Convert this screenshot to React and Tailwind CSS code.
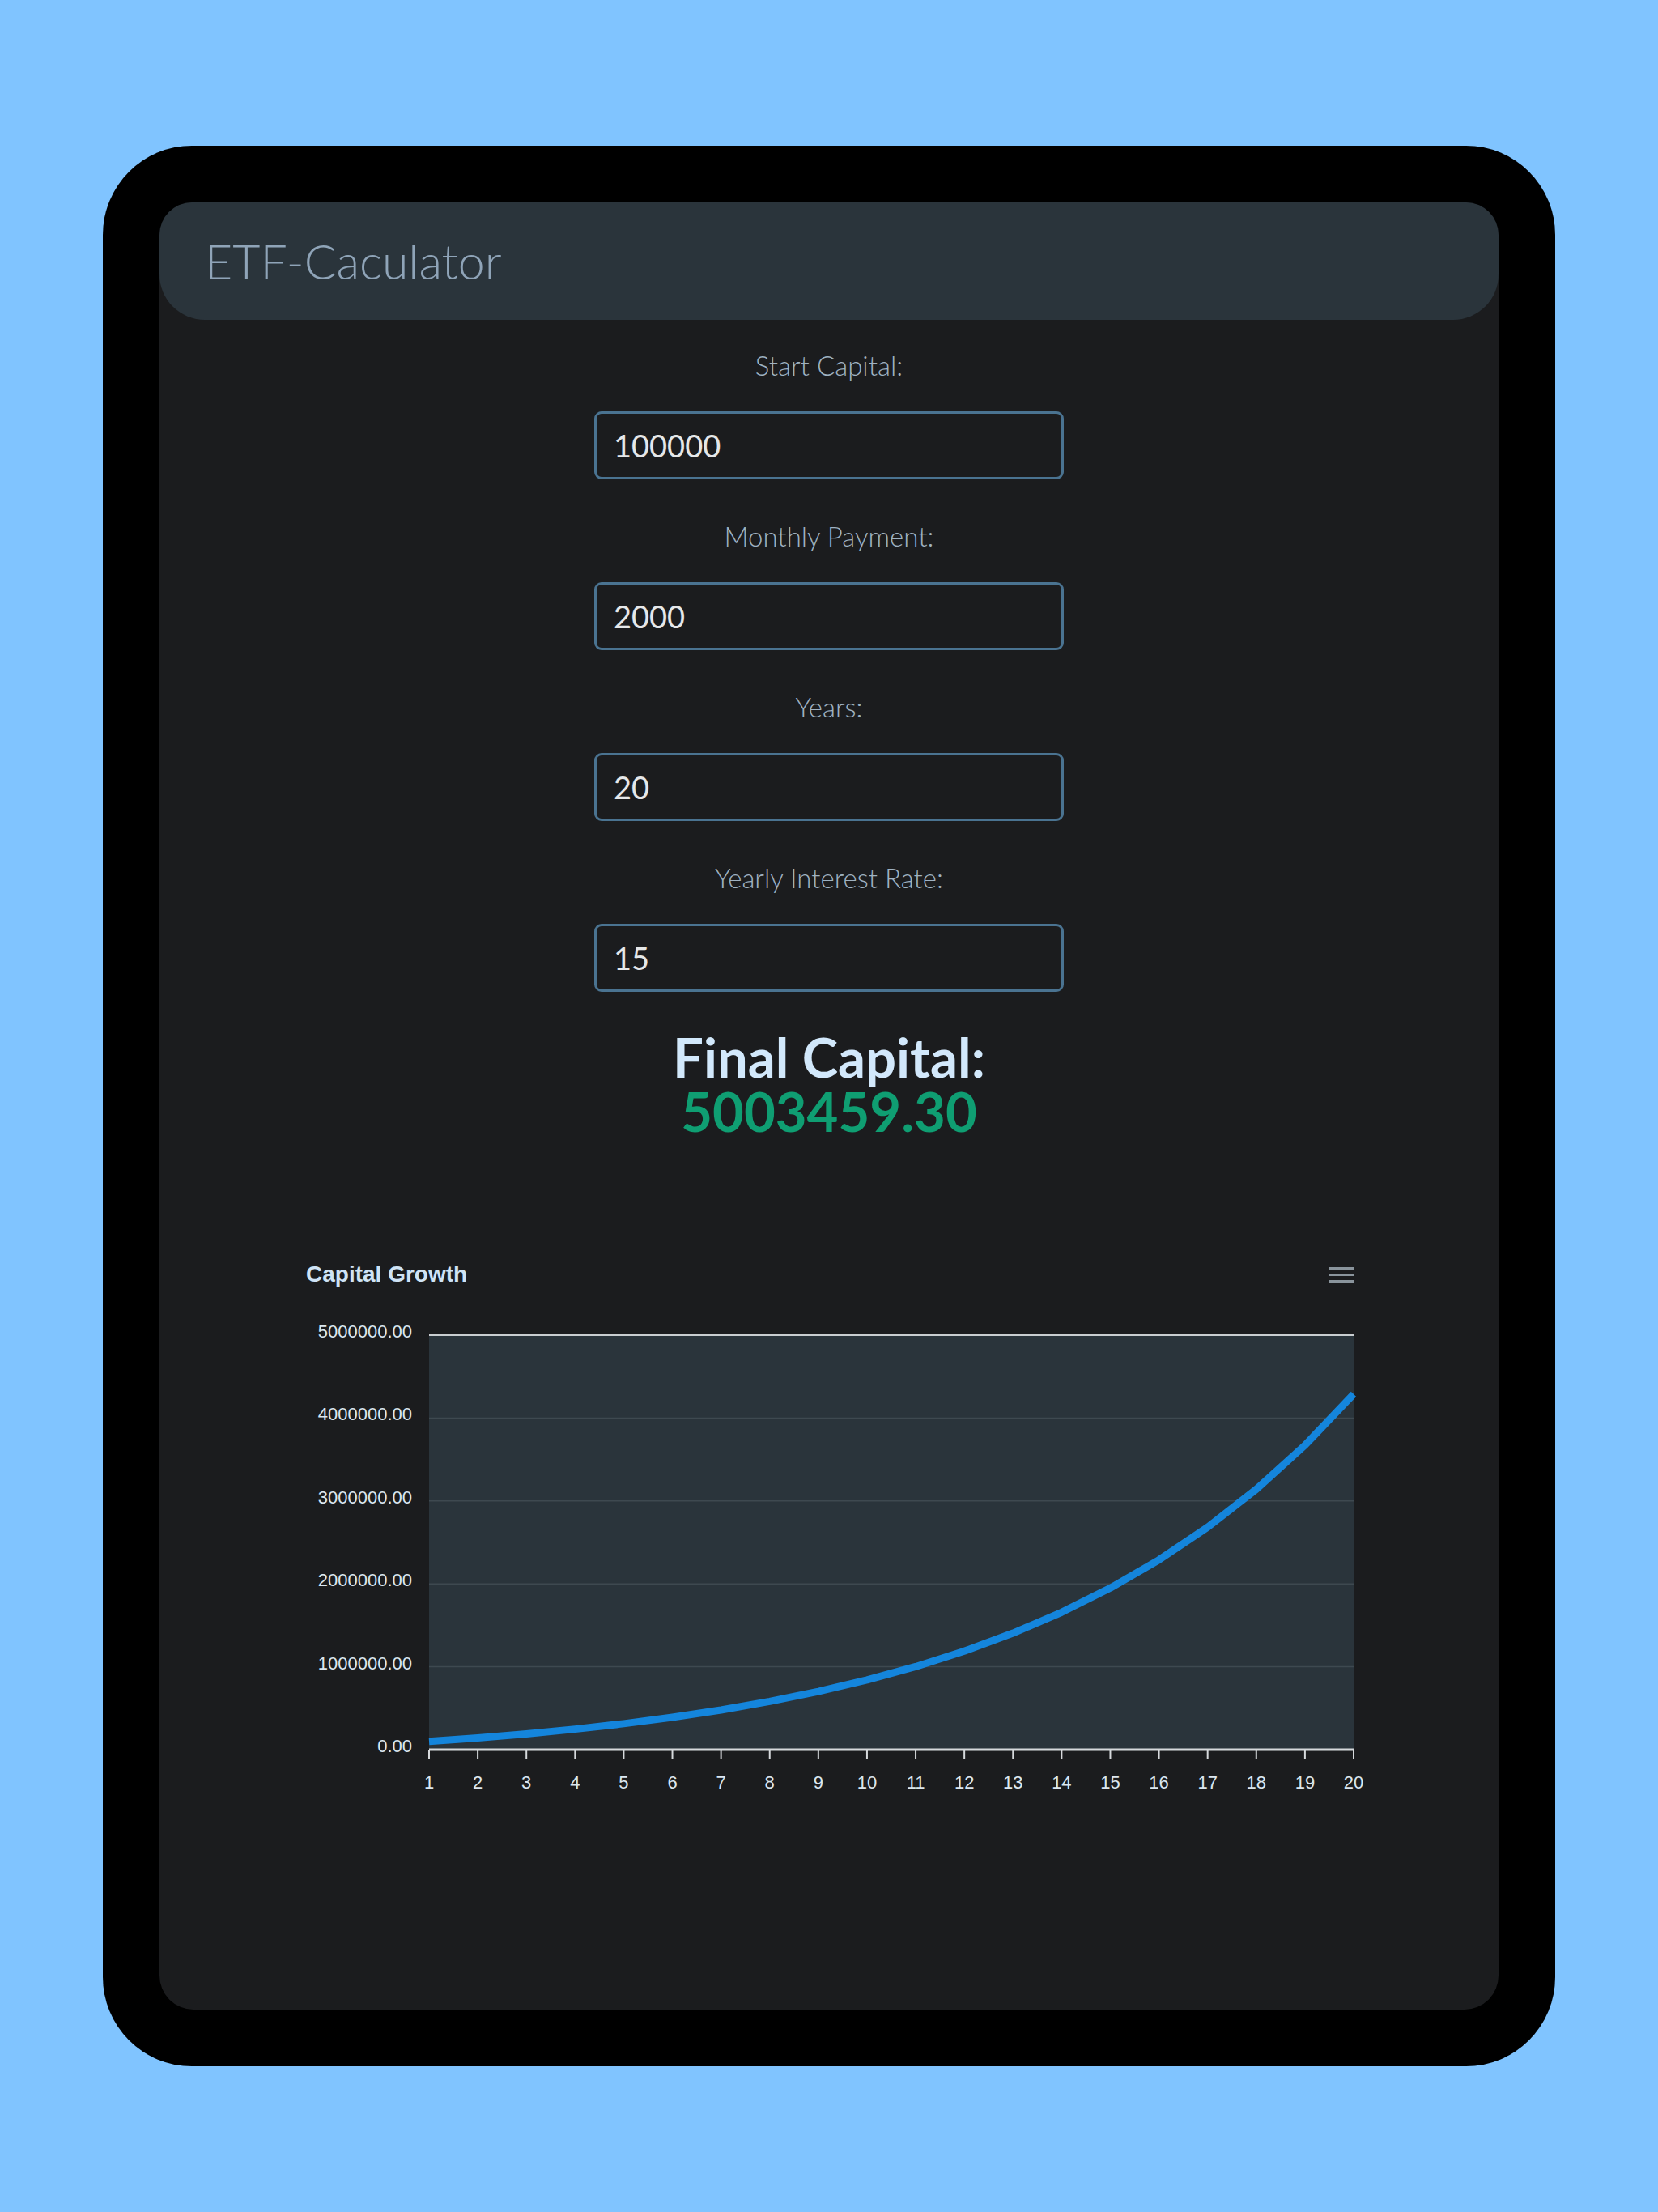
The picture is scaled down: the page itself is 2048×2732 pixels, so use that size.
const fields = [
  { label: 'Start Capital:', value: '100000' },
  { label: 'Monthly Payment:', value: '2000' },
  { label: 'Years:', value: '20' },
  { label: 'Yearly Interest Rate:', value: '15' },
];

// value after k years, monthly compounding, payment at start of month
function capitalAfter(years, start = 100000, monthly = 2000, rate = 15) {
  const r = rate / 100 / 12;
  const m = years * 12;
  const g = Math.pow(1 + r, m);
  return start * g + monthly * (1 + r) * ((g - 1) / r);
}

function GrowthChart() {
  const x0 = 176;
  const x1 = 1318;
  const y0 = 20;
  const y1 = 532;
  const max = 5000000;
  const step = (x1 - x0) / 19;
  const points = Array.from({ length: 20 }, (_, i) => {
    const v = capitalAfter(i);
    return [x0 + i * step, y1 - (v / max) * (y1 - y0)];
  });
  const ticks = [5000000, 4000000, 3000000, 2000000, 1000000, 0];

  return (
    <svg width="1340" height="600" viewBox="0 0 1340 600" className="block overflow-visible">
      <rect x={x0} y={y0} width={x1 - x0} height={y1 - y0} fill="#2a343b" />
      {ticks.map((t, i) => {
        const y = y0 + i * ((y1 - y0) / 5);
        return (
          <g key={t}>
            {i > 0 && i < 5 && <line x1={x0} x2={x1} y1={y} y2={y} stroke="#3e4950" strokeWidth="1.5" />}
            <text
              x="155"
              y={y + 3}
              textAnchor="end"
              fill="#dce7f0"
              fontSize="22"
              fontFamily="'Liberation Sans', Arial, sans-serif"
            >
              {t.toFixed(2)}
            </text>
          </g>
        );
      })}
      <line x1={x0} x2={x1} y1={y0} y2={y0} stroke="#c9cdd0" strokeWidth="2" />
      <polyline
        points={points.map((p) => p.join(',')).join(' ')}
        fill="none"
        stroke="#1485dc"
        strokeWidth="9"
        strokeLinejoin="round"
      />
      <line x1={x0} x2={x1} y1={y1} y2={y1} stroke="#d6d9dc" strokeWidth="3" />
      {points.map((p, i) => (
        <g key={i}>
          <line x1={p[0]} x2={p[0]} y1={y1} y2={y1 + 12} stroke="#d6d9dc" strokeWidth="2" />
          <text
            x={p[0]}
            y="580"
            textAnchor="middle"
            fill="#dce7f0"
            fontSize="22"
            fontFamily="'Liberation Sans', Arial, sans-serif"
          >
            {i + 1}
          </text>
        </g>
      ))}
    </svg>
  );
}

export default function App() {
  return (
    <div className="min-h-[2732px] bg-[#80c4ff] pt-[180px] px-[127px]">
      <div className="h-[2372px] rounded-[110px] bg-black p-[70px]">
        <div className="h-full rounded-[42px] bg-[#1b1c1e] font-['Lato',sans-serif]">
          <header className="flex h-[145px] items-center rounded-t-[40px] rounded-b-[56px] bg-[#2a343b] pl-[56px]">
            <h1 className="text-[59px] font-light leading-none text-[#8fa4b8]">ETF-Caculator</h1>
          </header>

          <div className="mt-[36px] flex flex-col items-center gap-[50px]">
            {fields.map((f) => (
              <div key={f.label} className="flex flex-col items-center">
                <label className="h-[40px] text-[33px] font-light leading-[40px] text-[#9fb2c2]">{f.label}</label>
                <input
                  type="text"
                  defaultValue={f.value}
                  className="mt-[37px] h-[84px] w-[580px] rounded-[9px] border-[3px] border-[#4a7391] bg-transparent px-[21px] text-[38px] text-[#e5e7e9] outline-none"
                />
              </div>
            ))}
          </div>

          <div className="mt-[47px] flex flex-col items-center text-[67px] font-bold leading-[67px]">
            <div className="text-[#d2e8fb]">Final Capital:</div>
            <div className="text-[#0f9e72]">5003459.30</div>
          </div>

          <div className="mx-auto mt-[148px] w-[1340px]">
            <div className="flex h-[40px] items-center justify-between pl-[24px] pr-[21px]">
              <span className="font-['Liberation_Sans',Arial,sans-serif] text-[28px] font-bold text-[#cfe3f5]">
                Capital Growth
              </span>
              <div className="flex w-[31px] flex-col gap-[5px]">
                <span className="h-[3px] bg-[#8a949c]" />
                <span className="h-[3px] bg-[#8a949c]" />
                <span className="h-[3px] bg-[#8a949c]" />
              </div>
            </div>
            <div className="mt-[35px]">
              <GrowthChart />
            </div>
          </div>
        </div>
      </div>
    </div>
  );
}
